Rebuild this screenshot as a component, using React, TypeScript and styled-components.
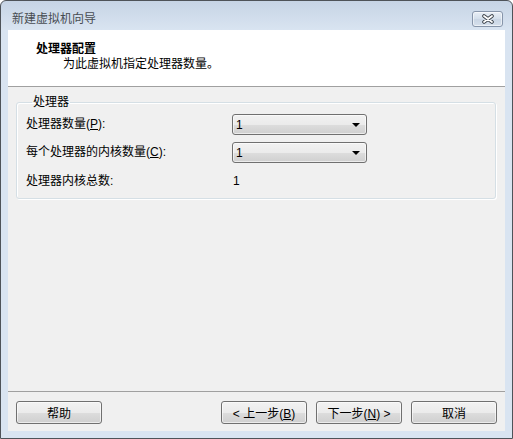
import { createGlobalStyle, styled } from "styled-components";

const GlobalStyle = createGlobalStyle`
  html, body {
    margin: 0;
    padding: 0;
    background: #ffffff;
  }
  body {
    font-family: "Liberation Sans", "Noto Sans CJK SC", sans-serif;
    font-size: 12px;
    color: #000;
  }
`;

const Window = styled.div`
  box-sizing: border-box;
  width: 513px;
  height: 439px;
  display: flex;
  flex-direction: column;
  border: 1px solid #4e5359;
  border-radius: 6px 6px 0 0;
  background: linear-gradient(#c6d4e5 0px, #d9e4f1 29px, #d9e4f1 100%);
  overflow: hidden;
`;

const TitleBar = styled.div`
  height: 29px;
  flex-shrink: 0;
  display: flex;
  align-items: flex-start;
  justify-content: space-between;
  padding: 10px 9px 0 11px;
  box-sizing: border-box;
`;

const Title = styled.span`
  line-height: 17px;
  color: #474c52;
`;

const CloseButton = styled.button`
  width: 31px;
  height: 16px;
  padding: 0;
  display: flex;
  align-items: center;
  justify-content: center;
  border: 1px solid #8795aa;
  border-radius: 3px;
  background: linear-gradient(#e9eff6, #d3deeb 50%, #c9d5e4 51%, #d6e0ec);
  box-shadow: inset 0 0 0 1px rgba(255, 255, 255, 0.55);
`;

const Client = styled.div`
  flex: 1;
  margin: 0 7px 7px 7px;
  display: flex;
  flex-direction: column;
  background: #f0f0f0;
`;

const Header = styled.div`
  box-sizing: border-box;
  height: 57px;
  flex-shrink: 0;
  background: #ffffff;
  border-bottom: 1px solid #a0a0a0;
  padding: 11px 0 0 28px;
`;

const HeaderTitle = styled.div`
  font-weight: bold;
  line-height: 17px;
`;

const HeaderSub = styled.div`
  line-height: 13px;
  padding-left: 27px;
`;

const Content = styled.div`
  flex: 1;
  padding: 8px 9px 0 8px;
`;

const Group = styled.fieldset`
  margin: 0;
  padding: 5px 9px 6px 9px;
  border: 1px solid #d5dfe5;
  border-radius: 3px;
  box-shadow: 1px 1px 0 #ffffff, inset 1px 1px 0 #ffffff;
  display: grid;
  grid-template-columns: 206px 135px;
  row-gap: 7px;
`;

const Legend = styled.legend`
  padding: 0 1px;
  margin-left: 6px;
  line-height: 14px;
`;

const Label = styled.div<{ $top?: number }>`
  height: 21px;
  line-height: 21px;
  white-space: nowrap;
  margin-top: ${(p) => p.$top ?? 0}px;
`;

const Value = styled.div<{ $top?: number }>`
  height: 21px;
  line-height: 21px;
  padding-left: 1px;
  margin-top: ${(p) => p.$top ?? 0}px;
`;

const Combo = styled.div`
  box-sizing: border-box;
  height: 21px;
  display: flex;
  align-items: center;
  justify-content: space-between;
  padding: 0 6px 0 3px;
  border: 1px solid #707070;
  border-radius: 3px;
  background: linear-gradient(#f2f2f2, #ebebeb 50%, #dddddd 51%, #cfcfcf);
  box-shadow: inset 0 0 0 1px rgba(255, 255, 255, 0.6);
`;

const Arrow = styled.span`
  width: 0;
  height: 0;
  border-left: 4px solid transparent;
  border-right: 4px solid transparent;
  border-top: 4px solid #000;
`;

const Footer = styled.div`
  flex-shrink: 0;
  display: flex;
  gap: 9px;
  padding: 9px 8px 7px 8px;
  border-top: 1px solid #a0a0a0;
`;

const Spacer = styled.div`
  flex: 1;
`;

const Button = styled.button`
  box-sizing: border-box;
  width: 86px;
  height: 23px;
  padding: 0;
  font-family: inherit;
  font-size: 12px;
  color: #000;
  border: 1px solid #707070;
  border-radius: 3px;
  background: linear-gradient(#f2f2f2, #ebebeb 50%, #dddddd 51%, #cfcfcf);
  box-shadow: inset 0 0 0 1px rgba(255, 255, 255, 0.6);
`;

const Key = styled.span`
  text-decoration: underline;
`;

const CloseGlyph = () => (
  <svg width="14" height="10" viewBox="0 0 14 10">
    <path d="M3 2 L11 8 M11 2 L3 8" stroke="#3a4048" strokeWidth="3.6" strokeLinecap="round" />
    <path d="M3 2 L11 8 M11 2 L3 8" stroke="#ffffff" strokeWidth="1.8" strokeLinecap="round" />
  </svg>
);

export default function App() {
  return (
    <>
      <GlobalStyle />
      <Window>
        <TitleBar>
          <Title>新建虚拟机向导</Title>
          <CloseButton>
            <CloseGlyph />
          </CloseButton>
        </TitleBar>
        <Client>
          <Header>
            <HeaderTitle>处理器配置</HeaderTitle>
            <HeaderSub>为此虚拟机指定处理器数量。</HeaderSub>
          </Header>
          <Content>
            <Group>
              <Legend>处理器</Legend>
              <Label>
                处理器数量(<Key>P</Key>):
              </Label>
              <Combo>
                <span>1</span>
                <Arrow />
              </Combo>
              <Label>
                每个处理器的内核数量(<Key>C</Key>):
              </Label>
              <Combo>
                <span>1</span>
                <Arrow />
              </Combo>
              <Label $top={1}>处理器内核总数:</Label>
              <Value $top={1}>1</Value>
            </Group>
          </Content>
          <Footer>
            <Button>帮助</Button>
            <Spacer />
            <Button>
              &lt; 上一步(<Key>B</Key>)
            </Button>
            <Button>
              下一步(<Key>N</Key>) &gt;
            </Button>
            <Button>取消</Button>
          </Footer>
        </Client>
      </Window>
    </>
  );
}
